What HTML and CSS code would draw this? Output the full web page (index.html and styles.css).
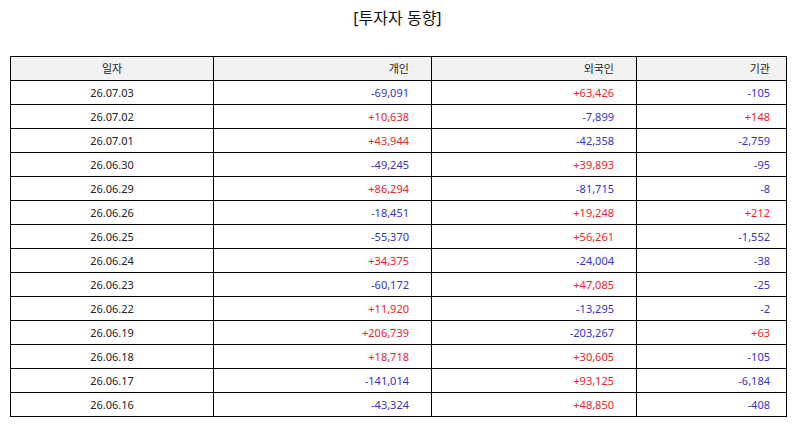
FILE: index.html
```html
<!DOCTYPE html>
<html lang="ko">
<head>
<meta charset="utf-8">
<title>투자자 동향</title>
<link rel="stylesheet" href="styles.css">
</head>
<body>
<div class="page">
  <h1 class="title">[투자자 동향]</h1>
  <table class="grid">
    <colgroup>
      <col class="c-date"><col class="c-ind"><col class="c-for"><col class="c-inst">
    </colgroup>
    <thead>
      <tr><th class="date">일자</th><th class="num">개인</th><th class="num">외국인</th><th class="num last">기관</th></tr>
    </thead>
    <tbody>
      <tr><td class="date">26.07.03</td><td class="num dn">-69,091</td><td class="num up">+63,426</td><td class="num last dn">-105</td></tr>
      <tr><td class="date">26.07.02</td><td class="num up">+10,638</td><td class="num dn">-7,899</td><td class="num last up">+148</td></tr>
      <tr><td class="date">26.07.01</td><td class="num up">+43,944</td><td class="num dn">-42,358</td><td class="num last dn">-2,759</td></tr>
      <tr><td class="date">26.06.30</td><td class="num dn">-49,245</td><td class="num up">+39,893</td><td class="num last dn">-95</td></tr>
      <tr><td class="date">26.06.29</td><td class="num up">+86,294</td><td class="num dn">-81,715</td><td class="num last dn">-8</td></tr>
      <tr><td class="date">26.06.26</td><td class="num dn">-18,451</td><td class="num up">+19,248</td><td class="num last up">+212</td></tr>
      <tr><td class="date">26.06.25</td><td class="num dn">-55,370</td><td class="num up">+56,261</td><td class="num last dn">-1,552</td></tr>
      <tr><td class="date">26.06.24</td><td class="num up">+34,375</td><td class="num dn">-24,004</td><td class="num last dn">-38</td></tr>
      <tr><td class="date">26.06.23</td><td class="num dn">-60,172</td><td class="num up">+47,085</td><td class="num last dn">-25</td></tr>
      <tr><td class="date">26.06.22</td><td class="num up">+11,920</td><td class="num dn">-13,295</td><td class="num last dn">-2</td></tr>
      <tr><td class="date">26.06.19</td><td class="num up">+206,739</td><td class="num dn">-203,267</td><td class="num last up">+63</td></tr>
      <tr><td class="date">26.06.18</td><td class="num up">+18,718</td><td class="num up">+30,605</td><td class="num last dn">-105</td></tr>
      <tr><td class="date">26.06.17</td><td class="num dn">-141,014</td><td class="num up">+93,125</td><td class="num last dn">-6,184</td></tr>
      <tr><td class="date">26.06.16</td><td class="num dn">-43,324</td><td class="num up">+48,850</td><td class="num last dn">-408</td></tr>
    </tbody>
  </table>
</div>
</body>
</html>
```

FILE: styles.css
```css
html, body {
  margin: 0;
  padding: 0;
  background: #ffffff;
}

.page {
  width: 795px;
  font-family: "Noto Sans", "Noto Sans CJK KR", sans-serif;
  color: #222222;
}

.title {
  margin: 0;
  height: 56px;
  padding-top: 6px;
  box-sizing: border-box;
  text-align: center;
  font-size: 16px;
  font-weight: normal;
  line-height: 24px;
  color: #111111;
}

.grid {
  margin-left: 10px;
  width: 776px;
  border-collapse: collapse;
  table-layout: fixed;
  font-size: 11px;
}

.c-date { width: 203px; }
.c-ind { width: 218px; }
.c-for { width: 205px; }
.c-inst { width: 150px; }

.grid th,
.grid td {
  border: 1px solid #000000;
  height: 24px;
  padding: 0 22px 0 6px;
  box-sizing: border-box;
  line-height: 14px;
  white-space: nowrap;
}

.grid th {
  background: #f2f2f2;
  font-weight: normal;
  color: #222222;
}

.grid .date {
  text-align: center;
  padding: 0;
}

.grid .num {
  text-align: right;
}

.grid .last {
  padding-right: 16px;
}

.up { color: #e8262b; }
.dn { color: #3434c8; }
```
